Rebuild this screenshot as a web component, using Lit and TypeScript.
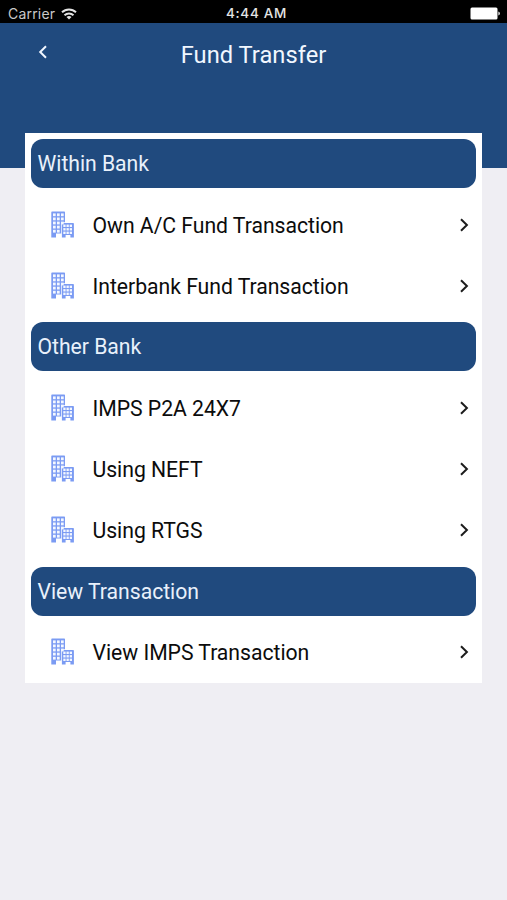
import { LitElement, html, css, svg } from "lit";
import { customElement } from "lit/decorators.js";

interface Section {
  title: string;
  items: string[];
}

const SECTIONS: Section[] = [
  { title: "Within Bank", items: ["Own A/C Fund Transaction", "Interbank Fund Transaction"] },
  { title: "Other Bank", items: ["IMPS P2A 24X7", "Using NEFT", "Using RTGS"] },
  { title: "View Transaction", items: ["View IMPS Transaction"] },
];

const tallWindows = [0, 1, 2, 3, 4].flatMap((r) =>
  [0, 1, 2]
    .filter((c) => r < 3 || c < 2)
    .map((c) => svg`<rect x=${2 + c * 4} y=${2.4 + r * 4.1} width="2.7" height="2.8" />`),
);
const lowWindows = [0, 1, 2].flatMap((r) =>
  [0, 1, 2].map((c) => svg`<rect x=${12.3 + c * 3.2} y=${13.6 + r * 3.5} width="2.3" height="2.4" />`),
);

@customElement("app-root")
export class AppRoot extends LitElement {
  static styles = css`
    :host {
      display: flex;
      flex-direction: column;
      height: 900px;
      background: #efeef3;
      font-family: Roboto, "Liberation Sans", sans-serif;
      overflow: hidden;
    }
    .status {
      display: grid;
      grid-template-columns: 1fr auto 1fr;
      align-items: center;
      height: 23px;
      box-sizing: border-box;
      padding: 4px 7px 0 8px;
      background: #000;
      color: #e4e4e4;
      font: 14px/19px Inter, "Liberation Sans", sans-serif;
    }
    .carrier {
      display: flex;
      align-items: center;
      gap: 6px;
      color: #c9c9c9;
      font-size: 14px;
      letter-spacing: 0.2px;
    }
    .time {
      padding-left: 5px;
      font-weight: 500;
      font-size: 13.5px;
      letter-spacing: 0.7px;
    }
    .battery {
      justify-self: end;
    }
    svg {
      display: block;
      flex: none;
    }
    .header {
      display: grid;
      grid-template-columns: 60px 1fr 60px;
      align-items: start;
      height: 145px;
      flex: none;
      background: #204a7e;
      color: #f1f7ff;
    }
    .back {
      margin: 21px 0 0 37px;
    }
    .title {
      margin-top: 17px;
      text-align: center;
      font-size: 23.7px;
      line-height: 30px;
      letter-spacing: 0.02px;
    }
    .card {
      margin: -35px 25px 0;
      background: #fff;
      flex: none;
    }
    .group {
      display: flex;
      align-items: center;
      height: 61.1px;
      padding: 0 6px;
    }
    .pill {
      flex: 1;
      height: 49px;
      border-radius: 12px;
      background: #204a7e;
      color: #e9f1fb;
      padding-left: 6.5px;
      font-size: 21.2px;
      line-height: 50.6px;
      letter-spacing: -0.03px;
    }
    .row {
      display: flex;
      align-items: center;
      height: 61.1px;
      box-sizing: border-box;
      padding: 0 12px 0 26px;
    }
    .label {
      flex: 1;
      padding: 2px 0 0 17.5px;
      color: #0c0c0c;
      font-size: 21.2px;
      line-height: 30px;
      letter-spacing: -0.03px;
      white-space: nowrap;
    }
  `;

  private building() {
    return html`<svg width="24" height="28" viewBox="0 0 24 28">
      <path d="M0.3 1.2Q.3 .5 1 .5H13.3Q14 .5 14 1.2V11.2H10.2V22.4H5V26.6H0.3Z" fill="#7b9bf3" />
      <path
        d="M11.4 12.1H22.2Q22.9 12.1 22.9 12.8V26.6H19.4V24H14.6V26.6H10.9V12.8Q10.9 12.1 11.4 12.1Z"
        fill="#7b9bf3"
      />
      <g fill="#f4f8ff">${tallWindows}${lowWindows}</g>
    </svg>`;
  }

  private chevron() {
    return html`<svg width="12" height="16" viewBox="0 0 12 16">
      <path d="M3 2.3L8.9 8L3 13.7" fill="none" stroke="#1c1c1c" stroke-width="2" />
    </svg>`;
  }

  render() {
    return html`
      <div class="status">
        <div class="carrier">
          <span>Carrier</span>
          <svg width="16" height="12" viewBox="0 0 16 12">
            <g fill="none" stroke="#e4e4e4" stroke-width="1.9">
              <path d="M1 4.3A10 10 0 0 1 15 4.3" />
              <path d="M3.5 7.2A6.6 6.6 0 0 1 12.5 7.2" />
            </g>
            <path d="M5.5 9A3.8 3.8 0 0 1 10.5 9L8 11.6Z" fill="#e4e4e4" />
          </svg>
        </div>
        <div class="time">4:44 AM</div>
        <svg class="battery" width="30" height="13" viewBox="0 0 30 13">
          <rect x="0.5" y="0.6" width="27" height="12" rx="1.5" fill="#fff" />
          <path d="M28.3 4.5Q30 5 30 6.5T28.3 8.5Z" fill="#ddd" />
        </svg>
      </div>
      <div class="header">
        <svg class="back" width="12" height="16" viewBox="0 0 12 16">
          <path d="M9 2.2L3.2 8L9 13.8" fill="none" stroke="#f1f7ff" stroke-width="2" />
        </svg>
        <div class="title">Fund Transfer</div>
      </div>
      <div class="card">
        ${SECTIONS.map(
          (s) => html`
            <div class="group"><div class="pill">${s.title}</div></div>
            ${s.items.map(
              (t) => html`<div class="row">${this.building()}<span class="label">${t}</span>${this.chevron()}</div>`,
            )}
          `,
        )}
      </div>
    `;
  }
}
